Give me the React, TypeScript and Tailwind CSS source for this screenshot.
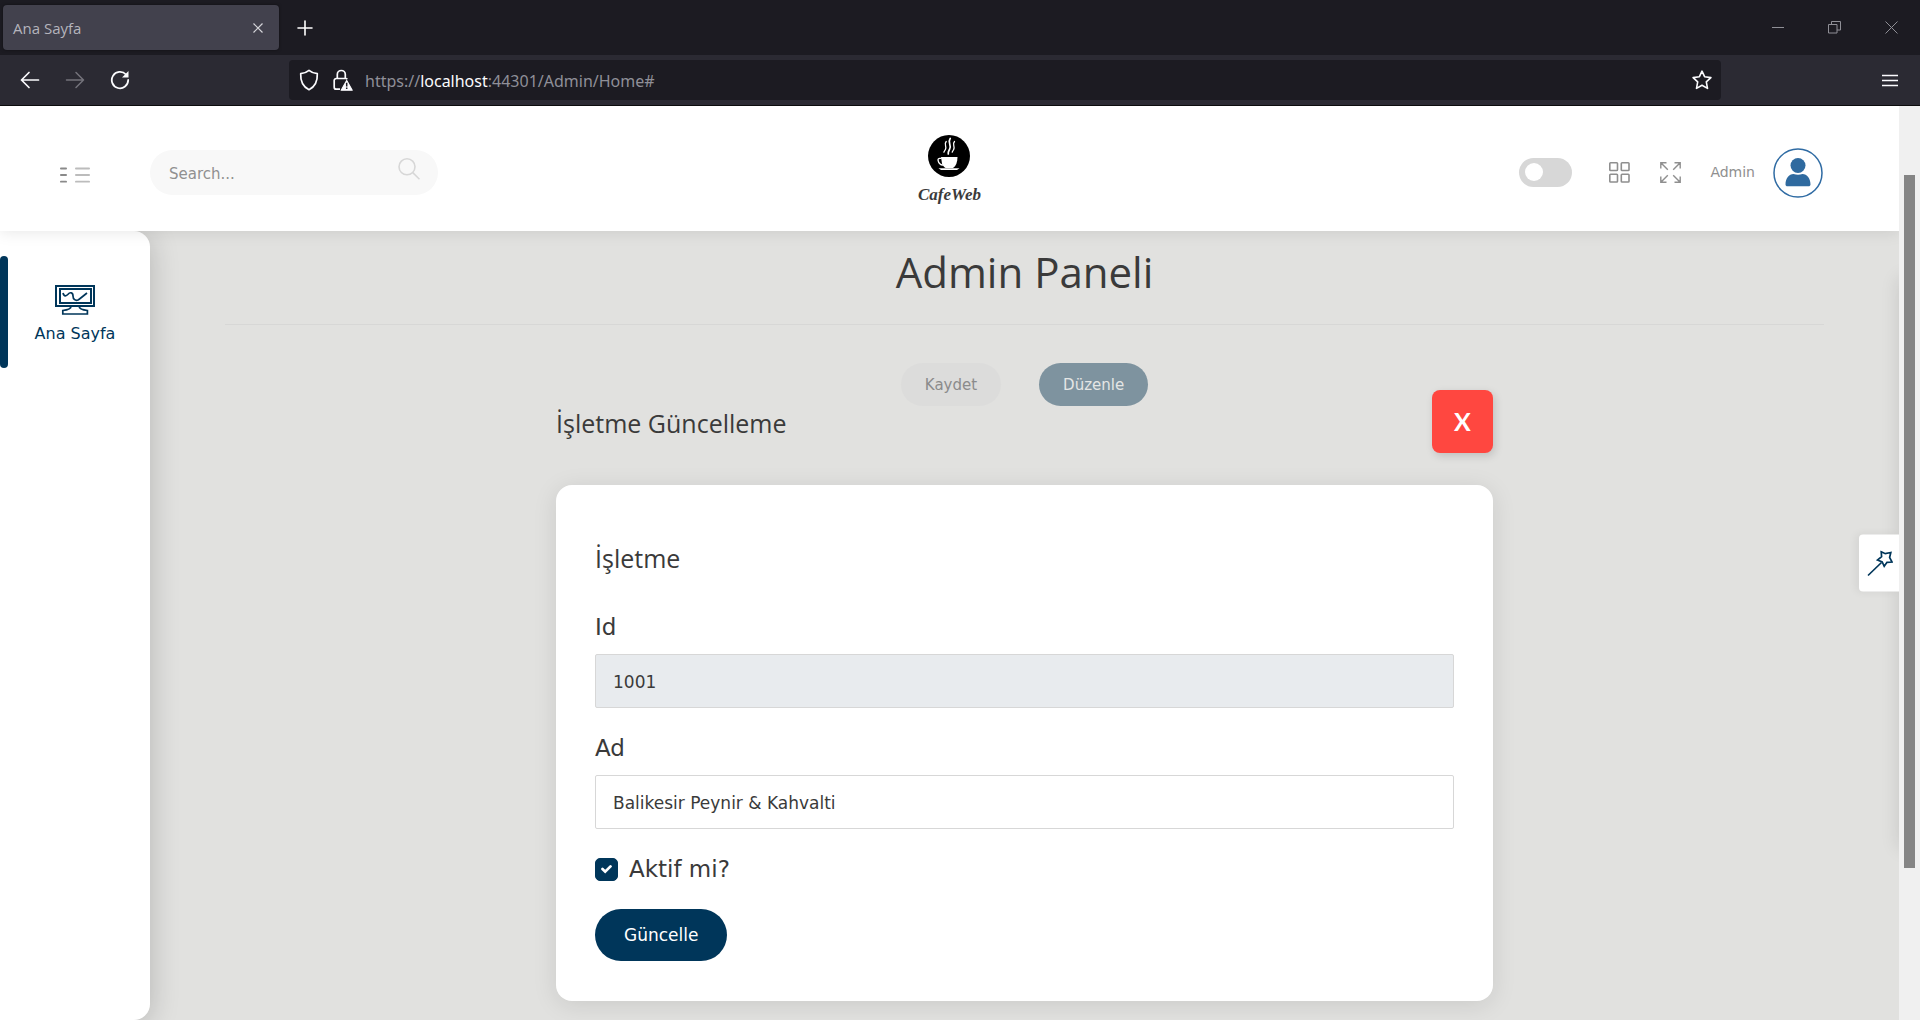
import type { ReactNode } from 'react';

function BrowserTabs() {
  return (
    <div className="flex h-[55px] items-center bg-[#1c1b22] pl-[3px] text-[#fbfbfe]">
      <div className="flex h-[45px] w-[276px] items-center justify-between rounded bg-[#42414d] pr-[13px] pl-[10px] shadow-[0_0_3px_rgba(0,0,0,0.5)]">
        <span className="pt-0.5 font-['Open_Sans','Noto_Sans',sans-serif] text-[15px] text-[#b5b4bc]">Ana Sayfa</span>
        <button aria-label="Sekmeyi kapat" className="flex h-4 w-4 items-center justify-center">
          <svg width="10" height="10" viewBox="0 0 10 10" stroke="#d5d5da" strokeWidth="1.2" fill="none">
            <path d="M.5.5l9 9M9.500.5l-9 9" />
          </svg>
        </button>
      </div>
      <button aria-label="Yeni sekme" className="ml-[18px]">
        <svg width="16" height="16" viewBox="0 0 16 16" stroke="#fff" strokeWidth="1.6" strokeLinecap="round">
          <path d="M8 1v14M1 8h14" />
        </svg>
      </button>
      <div className="ml-auto flex items-center gap-11 pr-[22px] text-[#8f8f96]">
        <button aria-label="Küçült">
          <svg width="12" height="13" viewBox="0 0 12 13" stroke="currentColor"><path d="M0 6.500h12" /></svg>
        </button>
        <button aria-label="Geri yükle">
          <svg width="13" height="13" viewBox="0 0 13 13" fill="none" stroke="currentColor">
            <path d="M.5 3.500h8.500v8.500h-8.500zM3.500 3.500v-3h9v8.500h-3.500" />
          </svg>
        </button>
        <button aria-label="Kapat">
          <svg width="13" height="13" viewBox="0 0 13 13" stroke="currentColor"><path d="M.5.5l12 12M12.500.5l-12 12" /></svg>
        </button>
      </div>
    </div>
  );
}

function BrowserToolbar() {
  return (
    <div className="flex h-[51px] items-center border-b border-[#0c0c0d] bg-[#2b2a33] text-[#fbfbfe]">
      <div className="flex w-[289px] shrink-0 items-center gap-[25px] pl-5">
        <button aria-label="Geri">
          <svg width="20" height="20" viewBox="0 0 20 20" fill="none" stroke="currentColor" strokeWidth="1.7" strokeLinecap="round" strokeLinejoin="round">
            <path d="M18.500 10H1.500M9 2.500L1.500 10L9 17.500" />
          </svg>
        </button>
        <button aria-label="İleri" className="text-[#74737b]">
          <svg width="20" height="20" viewBox="0 0 20 20" fill="none" stroke="currentColor" strokeWidth="1.500" strokeLinecap="round" strokeLinejoin="round">
            <path d="M1.500 10h17M11 2.500l7.500 7.500L11 17.500" />
          </svg>
        </button>
        <button aria-label="Yenile">
          <svg width="20" height="20" viewBox="0 0 20 20" fill="none" stroke="currentColor" strokeWidth="1.8" strokeLinecap="round">
            <path d="M16 4.500A8.200 8.200 0 1 0 18.200 10" />
            <path d="M18.500 1v6.500h-6.500z" fill="currentColor" stroke="none" />
          </svg>
        </button>
      </div>
      <div className="flex h-10 min-w-0 flex-1 items-center rounded bg-[#1c1b22] pr-[9px] pl-[10px]">
        <svg className="shrink-0" width="20" height="22" viewBox="0 0 20 22" fill="none" stroke="currentColor" strokeWidth="1.7" strokeLinejoin="round">
          <path d="M10 1.300C12 3 15 4.300 18.300 4.700C18.600 11.500 16.500 17.500 10 20.700C3.500 17.500 1.400 11.500 1.700 4.700C5 4.300 8 3 10 1.300z" />
        </svg>
        <svg className="ml-[14px] shrink-0" width="20" height="22" viewBox="0 0 20 22" fill="none" stroke="currentColor" strokeWidth="1.700">
          <path d="M4.300 9.500V5.500a4 4 0 0 1 8 0v4" />
          <path d="M7 20.200H3.200a2 2 0 0 1-2-2V11.500a2 2 0 0 1 2-2h9.600a2 2 0 0 1 1.500.7" />
          <path d="M13.700 11.500L19.200 21.200H8.200z" fill="currentColor" strokeWidth="1.200" strokeLinejoin="round" />
          <path d="M13.700 13.800v3.700M13.700 18.600v1.400" stroke="#1c1b22" strokeWidth="1.500" />
        </svg>
        <div className="ml-3 min-w-0 flex-1 truncate pt-0.5 font-['Noto_Sans','Open_Sans',sans-serif] text-base text-[#8f8f98]">
          https://<span className="text-[#fbfbfe]">localhost</span>:44301/Admin/Home#
        </div>
        <button aria-label="Yer imi ekle">
          <svg width="20" height="20" viewBox="0 0 20 20" fill="none" stroke="currentColor" strokeWidth="1.600" strokeLinejoin="round">
            <path d="M10 1.200L12.600 6.700L18.900 7.600L14.300 11.900L15.500 18.400L10 15.300L4.500 18.400L5.700 11.900L1.100 7.600L7.400 6.700z" />
          </svg>
        </button>
      </div>
      <div className="flex w-[199px] shrink-0 justify-end pr-[22px]">
        <button aria-label="Menü">
          <svg width="16" height="13" viewBox="0 0 16 13" stroke="currentColor" strokeWidth="1.600"><path d="M0 1.500h16M0 6.500h16M0 11.500h16" /></svg>
        </button>
      </div>
    </div>
  );
}

function Logo() {
  return (
    <a href="#" className="flex flex-col items-center pb-[3px]">
      <svg width="42" height="42" viewBox="0 0 42 42">
        <circle cx="21" cy="21" r="21" fill="#000" />
        <path d="M13 22h16.500c0 5-1.500 9-4.500 11h-7.500c-1.500-.9-2.600-2.300-3.400-4z" fill="#fff" />
        <path d="M13.500 23.300h-1.700a1.700 1.700 0 0 0-1.700 2.200c.5 2.200 1.800 4.300 4.900 4.700" fill="none" stroke="#fff" strokeWidth="1.300" />
        <path d="M10.500 33.300h21l-2.500 1.700H13z" fill="#fff" />
        <g fill="none" stroke="#fff" strokeLinecap="round">
          <path d="M18.200 6.500c-2.700 3 1 4.700-.8 8-.6 1.200-1.300 1.800-1.500 2.700" strokeWidth="1.300" />
          <path d="M22.200 3.500c-3 4.200 1.800 6.300-.6 10.700-.8 1.700-1.800 2.700-1.300 4.800" strokeWidth="1.700" />
          <path d="M26.500 6.500c-2.700 3 .8 4.700-.8 8-.6 1.200-1.300 1.800-1.500 2.700" strokeWidth="1.300" />
        </g>
      </svg>
      <span className="mt-1.5 font-['Liberation_Serif',serif] text-[17px] leading-6 font-bold text-[#3a3a3a] italic">CafeWeb</span>
    </a>
  );
}

function PageHeader() {
  return (
    <header className="relative z-20 grid h-[125px] shrink-0 grid-cols-[1fr_auto_1fr] items-center bg-white pt-2 font-['DejaVu_Sans',sans-serif] shadow-[0_1px_15px_rgba(0,0,0,0.1)]">
      <div className="flex items-center pl-[60px]">
        <button aria-label="Menüyü aç" className="mt-1">
          <svg width="30" height="16" viewBox="0 0 30 16" strokeWidth="1.800" strokeLinecap="round">
            <path d="M.9 1.500h5.200M.9 8h5.200M.9 14.700h5.200" stroke="#8a8a8a" />
            <path d="M15.900 1.500h13.200M15.900 8h13.200M15.900 14.700h13.200" stroke="#bcbcbc" />
          </svg>
        </button>
        <div className="relative ml-[60px] w-72">
          <input
            type="search"
            aria-label="Search"
            placeholder="Search..."
            className="h-[45px] w-full rounded-full bg-[#f8f8f8] pt-0.5 pr-14 pl-[19px] text-[15px] text-[#3a3a3a] outline-none placeholder:text-[#909090]"
          />
          <svg className="absolute top-2 right-[18px]" width="22" height="22" viewBox="0 0 22 22" fill="none" stroke="#d7d7d7" strokeWidth="1.600">
            <circle cx="9" cy="8.800" r="8" />
            <path d="M14.800 14.600l6.700 6.700" />
          </svg>
        </div>
      </div>
      <Logo />
      <div className="flex items-center justify-end pr-[76px] text-[#8f8f8f]">
        <label className="relative block h-[29px] w-[53px] cursor-pointer rounded-full bg-[#d7d7d7]">
          <input type="checkbox" role="switch" aria-label="Karanlık mod" className="absolute inset-0 opacity-0" />
          <span className="absolute top-[5px] left-[6px] h-[18px] w-[18px] rounded-full bg-white" />
        </label>
        <button aria-label="Uygulamalar" className="ml-[37px]">
          <svg width="21" height="21" viewBox="0 0 21 21" fill="none" stroke="currentColor" strokeWidth="1.600">
            <rect x=".8" y=".8" width="7.700" height="7.700" rx=".8" />
            <rect x="12.300" y=".8" width="7.700" height="7.700" rx=".8" />
            <rect x=".8" y="12.300" width="7.700" height="7.700" rx=".8" />
            <rect x="12.300" y="12.300" width="7.700" height="7.700" rx=".8" />
          </svg>
        </button>
        <button aria-label="Tam ekran" className="ml-[30px]">
          <svg width="21" height="21" viewBox="0 0 21 21" fill="none" stroke="currentColor" strokeWidth="1.400">
            <path d="M.8 6.500V.8h5.700M.8.8l7 7M14.500.8h5.700v5.700M20.200.8l-7 7M.8 14.500v5.700h5.700M.8 20.200l7-7M20.200 14.500v5.700h-5.700M20.200 20.200l-7-7" />
          </svg>
        </button>
        <button className="ml-[29px] flex items-center gap-[18px]">
          <span className="text-[14px]">Admin</span>
          <svg width="50" height="50" viewBox="0 0 50 50">
            <circle cx="25" cy="25" r="24" fill="#fff" stroke="#2f6ba3" strokeWidth="1.500" />
            <g fill="#2f6a9f">
              <circle cx="25" cy="17.500" r="7.500" />
              <path d="M12.500 36.500c0-6 3.500-10.500 8-10.500 1.500.6 3 .8 4.500.8s3-.2 4.500-.8c4.500 0 8 4.500 8 10.500 0 1.100-.8 1.800-2 1.800h-21c-1.200 0-2-.7-2-1.800z" />
            </g>
          </svg>
        </button>
      </div>
    </header>
  );
}

function Sidebar() {
  return (
    <nav className="relative z-10 w-[150px] shrink-0 rounded-r-2xl bg-white pt-[25px] shadow-[0_4px_30px_rgba(0,0,0,0.2)]">
      <a href="#" className="relative flex h-28 flex-col items-center gap-[7px] pt-[29px] text-[#00365a]">
        <span className="absolute inset-y-0 left-0 w-2 rounded bg-[#00365a]" aria-hidden="true" />
        <svg width="40" height="30" viewBox="0 0 40 30" fill="none" stroke="currentColor" strokeWidth="2">
          <rect x="1" y="1" width="38" height="20" />
          <rect x="5" y="4" width="31" height="14" />
          <path d="M8 8c1 4 3.500 3 5 1.300 2-2.500 5-2 5 1.700 0 3.500 2.500 5 5 4l1.500-1 7.500-6" strokeWidth="1.700" />
          <path d="M16 21.500c0 2.500-4 3.500-8.200 4v3.500h24.600v-3.500c-4.200-.5-8.200-1.500-8.200-4" strokeWidth="1.700" />
        </svg>
        <span className="text-base leading-6">Ana Sayfa</span>
      </a>
    </nav>
  );
}

function Field({ id, label, value, readOnly }: { id: string; label: string; value: string; readOnly?: boolean }) {
  return (
    <div>
      <label htmlFor={id} className="block text-[23px] leading-8">{label}</label>
      <input
        id={id}
        defaultValue={value}
        readOnly={readOnly}
        className="mt-[11px] h-[54px] w-full rounded-xs border border-[#d7d7d7] bg-white px-[17px] pt-0.5 text-[17px] outline-none read-only:bg-[#e8ebee]"
      />
    </div>
  );
}

function UpdateDialog() {
  return (
    <section role="dialog" aria-labelledby="dialog-title" className="absolute inset-x-0 top-[159px] mx-auto w-[937px] max-w-full">
      <div className="flex items-center justify-between">
        <h2 id="dialog-title" className="pt-0.5 font-['Open_Sans','Noto_Sans',sans-serif] text-[25px] leading-8">İşletme Güncelleme</h2>
        <button aria-label="Kapat" className="h-[63px] w-[61px] rounded-lg bg-[#ff4740] font-['Lato',sans-serif] text-[25px] font-bold text-white shadow-[2px_3px_8px_rgba(0,0,0,0.15)]">
          X
        </button>
      </div>
      <form className="mt-8 rounded-2xl bg-white px-[39px] pt-[57px] pb-10 shadow-[0_4px_24px_rgba(0,0,0,0.1)]" onSubmit={(e) => e.preventDefault()}>
        <h3 className="font-['Open_Sans','Noto_Sans',sans-serif] text-[25px] leading-8">İşletme</h3>
        <div className="mt-[37px] flex flex-col gap-6">
          <Field id="business-id" label="Id" value="1001" readOnly />
          <Field id="business-name" label="Ad" value="Balikesir Peynir & Kahvalti" />
          <label className="relative flex items-center gap-[11px] text-[23px] leading-8">
            <input type="checkbox" defaultChecked className="peer h-[23px] w-[23px] appearance-none rounded-[5px] border border-[#00365a] checked:bg-[#00365a]" />
            <svg className="pointer-events-none absolute left-1.5 hidden peer-checked:block" width="11" height="10" viewBox="0 0 11 10" fill="none" stroke="#fff" strokeWidth="2.700" strokeLinecap="round">
              <path d="M1.500 5l2.700 2.700L9.500 2.400" />
            </svg>
            Aktif mi?
          </label>
          <button type="submit" className="h-[52px] self-start rounded-full bg-[#00365a] px-[29px] pt-0.5 text-[17px] text-white">Güncelle</button>
        </div>
      </form>
    </section>
  );
}

function PillButton({ children, className }: { children: ReactNode; className: string }) {
  return <button className={`h-[43px] rounded-full px-6 pt-0.5 text-[15px] ${className}`}>{children}</button>;
}

function SettingsDrawer() {
  return (
    <aside className="absolute top-1/2 left-full z-10 h-[570px] w-64 -translate-y-1/2 bg-white shadow-[0_0_18px_rgba(0,0,0,0.12)]">
      <button aria-label="Tema ayarları" className="absolute top-1/2 right-full flex h-[57px] w-10 -translate-y-1/2 items-center justify-end rounded-l bg-white pr-1.5 shadow-[-3px_0_8px_rgba(0,0,0,0.06)]">
        <svg width="26" height="26" viewBox="0 0 26 26" fill="none" stroke="#00365a" strokeWidth="1.700" strokeLinejoin="miter">
          <path d="M1 25L14.500 12" />
          <path d="M14.200 1.200L18.300 3.200L23.800 2L22.600 7L25 11.500L20 11.800L17.200 15.800L15.200 11.500L10.500 9.500L14.600 6.200z" />
        </svg>
      </button>
    </aside>
  );
}

export default function App() {
  return (
    <div className="flex h-screen flex-col overflow-hidden font-['DejaVu_Sans',sans-serif] text-[#3a3a3a]">
      <BrowserTabs />
      <BrowserToolbar />
      <div className="flex min-h-0 flex-1">
        <div className="relative flex min-w-0 flex-1 flex-col overflow-hidden bg-[#e1e1df]">
          <PageHeader />
          <div className="flex min-h-0 flex-1">
            <Sidebar />
            <main className="relative min-w-0 flex-1 px-[75px] pt-[13px]">
              <h1 className="text-center font-['Open_Sans','Noto_Sans',sans-serif] text-[42px] leading-[56px]">Admin Paneli</h1>
              <hr className="mt-6 border-[#d7d7d6]" />
              <div className="mt-[38px] flex justify-center gap-[38px]">
                <PillButton className="bg-[#dcdcdb] text-[#8b8b8b]">Kaydet</PillButton>
                <PillButton className="bg-[#7e939f] text-[#e4e6e5]">Düzenle</PillButton>
              </div>
              <UpdateDialog />
            </main>
          </div>
          <SettingsDrawer />
        </div>
        <div className="w-[21px] shrink-0 bg-[#f0f0f0] pt-[69px] pl-[5px]" aria-hidden="true">
          <div className="h-[82%] w-[11px] bg-[#858585]" />
        </div>
      </div>
    </div>
  );
}
